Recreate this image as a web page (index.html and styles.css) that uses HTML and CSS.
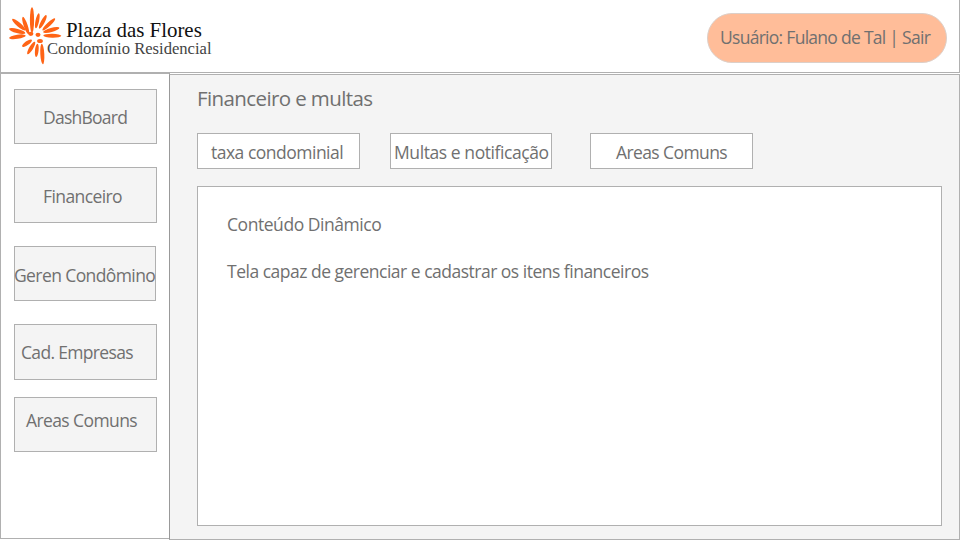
FILE: index.html
```
<!DOCTYPE html>
<html lang="pt-BR">
<head>
<meta charset="utf-8">
<title>Plaza das Flores</title>
<link rel="stylesheet" href="styles.css">
</head>
<body>
<div class="app">
  <header class="header">
    <div class="brand">
      <svg class="logo" width="56" height="60" viewBox="7 5 56 60" fill="#ff6416">
        <ellipse cx="32" cy="20" rx="2.1" ry="12.8"/>
        <ellipse cx="25.7" cy="25.6" rx="2" ry="9.2" transform="rotate(-19 25.7 25.6)"/>
        <ellipse cx="18.8" cy="24.6" rx="2.1" ry="8.7" transform="rotate(-49 18.8 24.6)"/>
        <ellipse cx="17.2" cy="31" rx="2.1" ry="8.4" transform="rotate(-75 17.2 31)"/>
        <ellipse cx="17.4" cy="36.8" rx="2.1" ry="8.4" transform="rotate(-99 17.4 36.8)"/>
        <ellipse cx="37.3" cy="20.8" rx="1.8" ry="7.7" transform="rotate(12 37.3 20.8)"/>
        <ellipse cx="42.8" cy="21.9" rx="1.9" ry="7.6" transform="rotate(28 42.8 21.9)"/>
        <ellipse cx="48.8" cy="24.4" rx="1.9" ry="8.6" transform="rotate(47 48.8 24.4)"/>
        <ellipse cx="51.3" cy="30" rx="2" ry="8.4" transform="rotate(75 51.3 30)"/>
        <ellipse cx="52.3" cy="35.7" rx="2" ry="9" transform="rotate(91 52.3 35.7)"/>
        <ellipse cx="27" cy="43.2" rx="2" ry="5.9" transform="rotate(55 27 43.2)"/>
        <ellipse cx="31.2" cy="48" rx="2" ry="7.2" transform="rotate(31 31.2 48)"/>
        <ellipse cx="36.8" cy="50.3" rx="1.8" ry="6.7" transform="rotate(6 36.8 50.3)"/>
        <ellipse cx="42.3" cy="54" rx="2" ry="10.2" transform="rotate(-3 42.3 54)"/>
        <ellipse cx="30.8" cy="33.8" rx="2.6" ry="2.1"/>
        <ellipse cx="38" cy="34.8" rx="2.5" ry="2.1"/>
        <ellipse cx="40" cy="41" rx="2.9" ry="2.1"/>
      </svg>
      <div class="brand-text">
        <div class="brand-name">Plaza das Flores</div>
        <div class="brand-sub">Condomínio Residencial</div>
      </div>
    </div>
    <div class="user"><span>Usuário: Fulano de Tal | Sair</span></div>
  </header>
  <div class="body">
    <nav class="sidebar">
      <a class="nav dash"><span>DashBoard</span></a>
      <a class="nav fin"><span>Financeiro</span></a>
      <a class="nav ger"><span>Geren Condômino</span></a>
      <a class="nav cad"><span>Cad. Empresas</span></a>
      <a class="nav areas"><span>Areas Comuns</span></a>
    </nav>
    <main class="main">
      <h1 class="title"><span>Financeiro e multas</span></h1>
      <div class="tabs">
        <a class="tab taxa"><span>taxa condominial</span></a>
        <a class="tab multas"><span>Multas e notificação</span></a>
        <a class="tab comuns"><span>Areas Comuns</span></a>
      </div>
      <section class="panel">
        <p class="lead"><span>Conteúdo Dinâmico</span></p>
        <p class="desc"><span>Tela capaz de gerenciar e cadastrar os itens financeiros</span></p>
      </section>
    </main>
  </div>
</div>
</body>
</html>
```
FILE: styles.css
```
* { box-sizing: border-box; }
body {
  margin: 0;
  background: #fff;
  color: #707070;
  font: 17.5px/24px "Open Sans", "Noto Sans", sans-serif;
  letter-spacing: -.6px;
  white-space: nowrap;
}
.app { width: 960px; height: 540px; overflow: hidden; }
.header {
  height: 73px;
  border: 1px solid #b0b0b0;
  border-top: 0;
  display: flex;
  justify-content: space-between;
  padding: 0 12px 0 6px;
}
.brand { display: flex; padding-top: 5px; }
.brand-text {
  font-family: "Liberation Serif", serif;
  letter-spacing: 0;
  margin-left: -16px;
  padding-top: 15px;
}
.brand-name { font-size: 20.9px; line-height: 21px; color: #111; padding-left: 19px; }
.brand-sub { font-size: 16.6px; line-height: 17px; color: #444; margin-top: -1px; }
.user {
  width: 240px;
  height: 50px;
  margin-top: 13px;
  border: 1px solid #dccfc8;
  border-radius: 25px;
  background: #ffbd99;
  padding: 11px 0 0 12px;
  letter-spacing: -.72px;
}
.body { display: flex; height: 467px; }
.sidebar {
  width: 170px;
  height: 466px;
  border: 1px solid #b0b0b0;
  border-right-color: #999;
  padding: 15px 0 0 13px;
}
.nav {
  display: block;
  width: 143px;
  height: 55px;
  border: 1px solid #b0b0b0;
  background: #f4f4f4;
}
.dash { padding: 15px 0 0 28px; letter-spacing: -.75px; }
.fin { height: 56px; margin-top: 23px; padding: 16px 0 0 28px; }
.ger { width: 142px; margin-top: 23px; padding-top: 16px; }
.ger span { margin-left: -1px; }
.cad { height: 56px; margin-top: 23px; padding: 15px 0 0 6px; letter-spacing: -.67px; }
.areas { margin-top: 17px; padding: 10px 0 0 11px; }
.main {
  width: 791px;
  height: 466px;
  margin: 1px 0 0 -1px;
  border: 1px solid #b0b0b0;
  border-left-color: #999;
  background: #f4f4f4;
  padding: 9px 0 0 27px;
}
.title {
  margin: 0;
  font-size: 20.5px;
  font-weight: 400;
  line-height: 28px;
  height: 49px;
  letter-spacing: -.6px;
}
.tabs { display: flex; }
.tab {
  width: 163px;
  height: 36px;
  border: 1px solid #b0b0b0;
  background: #fff;
  padding: 6px 0 0 13px;
}
.taxa { letter-spacing: -.5px; }
.multas { width: 162px; margin-left: 30px; padding-left: 3px; letter-spacing: -.42px; }
.comuns { margin-left: 38px; padding-left: 25px; }
.panel {
  width: 745px;
  height: 340px;
  margin-top: 17px;
  border: 1px solid #b0b0b0;
  background: #fff;
  padding: 25px 0 0 29px;
  letter-spacing: -.5px;
}
.panel p { margin: 0 0 23px; }
.lead { letter-spacing: -.45px; }
```
